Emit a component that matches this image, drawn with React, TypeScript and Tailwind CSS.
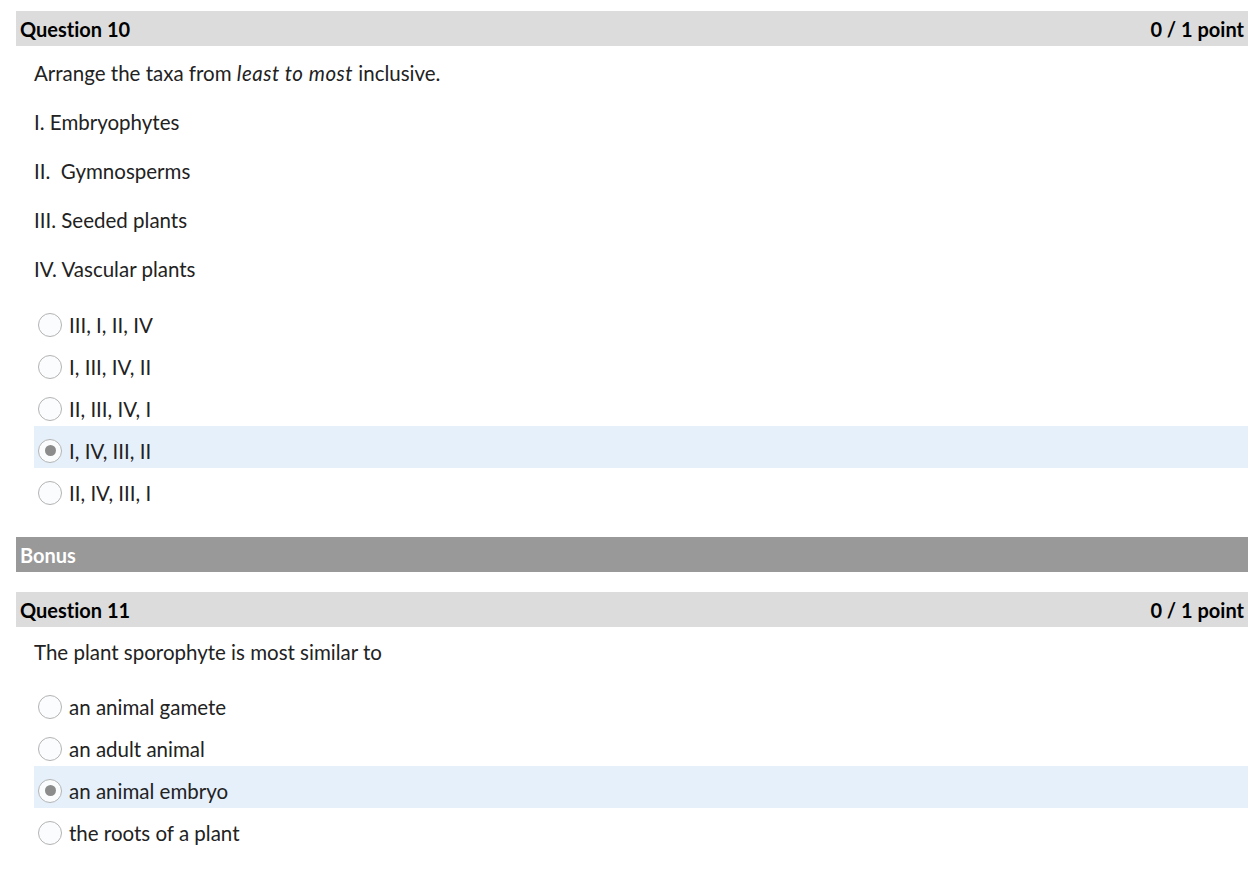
import React from "react";

type Option = { label: string; selected?: boolean };

const q10Options: Option[] = [
  { label: "III, I, II, IV" },
  { label: "I, III, IV, II" },
  { label: "II, III, IV, I" },
  { label: "I, IV, III, II", selected: true },
  { label: "II, IV, III, I" },
];

const q11Options: Option[] = [
  { label: "an animal gamete" },
  { label: "an adult animal" },
  { label: "an animal embryo", selected: true },
  { label: "the roots of a plant" },
];

function Radio({ checked }: { checked?: boolean }) {
  return (
    <span className="w-[24px] h-[24px] rounded-full border border-[#b3b3b3] bg-[#fbfcfe] flex items-center justify-center shrink-0">
      {checked && <span className="w-[11px] h-[11px] rounded-full bg-[#8c8c8c]" />}
    </span>
  );
}

function OptionList({ options }: { options: Option[] }) {
  return (
    <div className="flex flex-col">
      {options.map((opt) => (
        <div
          key={opt.label}
          className={`h-[42px] flex items-center pt-[7px] pl-[4px] ${opt.selected ? "bg-[#e6f0fb]" : ""}`}
        >
          <Radio checked={opt.selected} />
          <span className="ml-[7px] text-[20.5px] leading-[24px] text-[#222]">{opt.label}</span>
        </div>
      ))}
    </div>
  );
}

function QuestionHeader({ title, points }: { title: string; points: string }) {
  return (
    <div className="h-[35px] bg-[#dcdcdc] flex items-center justify-between px-[4px]">
      <span className="text-[20px] font-bold text-black">{title}</span>
      <span className="text-[20px] font-bold text-black">{points}</span>
    </div>
  );
}

export default function App() {
  return (
    <div
      className="w-[1260px] h-[874px] bg-white overflow-hidden pt-[11px] pl-[16px] pr-[12px] [font-variant-ligatures:none]"
      style={{ fontFamily: "Lato, 'Liberation Sans', sans-serif" }}
    >
      {/* Question 10 */}
      <QuestionHeader title="Question 10" points="0 / 1 point" />
      <div className="pl-[18px] text-[20.5px] leading-[28px] text-[#222]">
        <p className="mt-[13px]">
          Arrange the taxa from <em className="tracking-[0.5px]">least to most</em> inclusive.
        </p>
        <p className="mt-[21px]">I. Embryophytes</p>
        <p className="mt-[21px]">II.&nbsp; Gymnosperms</p>
        <p className="mt-[21px]">III. Seeded plants</p>
        <p className="mt-[21px]">IV. Vascular plants</p>
        <div className="mt-[17px]">
          <OptionList options={q10Options} />
        </div>
      </div>

      {/* Bonus section */}
      <div className="mt-[27px] h-[35px] bg-[#999999] flex items-center px-[4px]">
        <span className="text-[20px] font-bold text-white">Bonus</span>
      </div>

      {/* Question 11 */}
      <div className="mt-[20px]">
        <QuestionHeader title="Question 11" points="0 / 1 point" />
      </div>
      <div className="pl-[18px] text-[20.5px] leading-[28px] text-[#222]">
        <p className="mt-[11px]">The plant sporophyte is most similar to</p>
        <div className="mt-[16px]">
          <OptionList options={q11Options} />
        </div>
      </div>
    </div>
  );
}
